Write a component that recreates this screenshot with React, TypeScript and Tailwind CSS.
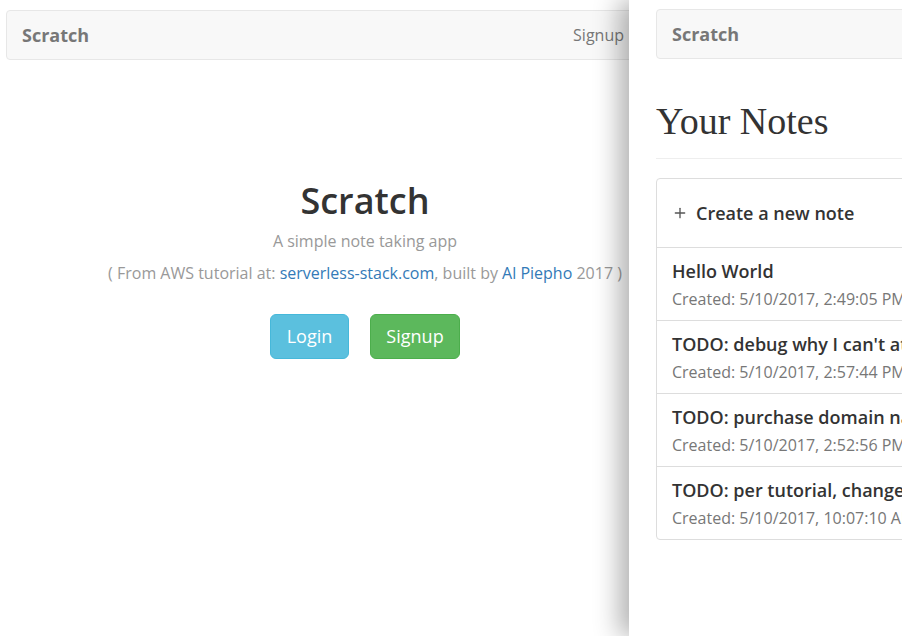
import { Plus } from 'lucide-react';

const notes = [
  { title: 'Hello World', created: 'Created: 5/10/2017, 2:49:05 PM' },
  { title: "TODO: debug why I can't attach files", created: 'Created: 5/10/2017, 2:57:44 PM' },
  { title: 'TODO: purchase domain name', created: 'Created: 5/10/2017, 2:52:56 PM' },
  { title: 'TODO: per tutorial, change the title', created: 'Created: 5/10/2017, 10:07:10 AM' },
];

const sans = "font-['Open_Sans','Liberation_Sans',sans-serif]";

function Navbar({ right }: { right?: string }) {
  return (
    <div className="h-[50px] flex items-center justify-between px-[15px] bg-[#f8f8f8] border border-[#e7e7e7] rounded-[4px]">
      <span className="text-[18px] font-bold text-[#777]">Scratch</span>
      {right && <span className="text-[16px] text-[#777]">{right}</span>}
    </div>
  );
}

export default function App() {
  return (
    <div className={`${sans} w-[902px] h-[636px] flex overflow-hidden bg-white`}>
      {/* Home page (partly covered) */}
      <div className="w-[629px] shrink-0 overflow-hidden">
        <div className="w-[730px]">
          <div className="pt-[10px] pl-[6px] w-[640px]">
            <Navbar right="Signup" />
          </div>
          <div className="text-center mt-[121px]">
            <h1 className="text-[36px] leading-[40px] font-semibold text-[#333]">Scratch</h1>
            <p className="mt-[9px] text-[16px] leading-[22px] text-[#999]">A simple note taking app</p>
            <p className="mt-[10px] text-[16px] leading-[22px] text-[#999]">
              ( From AWS tutorial at: <span className="text-[#337ab7]">serverless-stack.com</span>, built by{' '}
              <span className="text-[#337ab7]">Al Piepho</span> 2017 )
            </p>
            <div className="mt-[30px] flex justify-center gap-[21px]">
              <button className="w-[79px] h-[45px] rounded-[6px] bg-[#5bc0de] border border-[#46b8da] text-white text-[18px] font-medium">
                Login
              </button>
              <button className="w-[90px] h-[45px] rounded-[6px] bg-[#5cb85c] border border-[#4cae4c] text-white text-[18px] font-medium">
                Signup
              </button>
            </div>
          </div>
        </div>
      </div>

      {/* Notes page */}
      <div className="relative z-10 flex-1 min-w-0 bg-white shadow-[-10px_0_24px_rgba(0,0,0,0.3)]">
        <div className="w-[420px] pl-[27px]">
          <div className="pt-[9px]">
            <Navbar />
          </div>
          <h1 className="mt-[40px] text-[38px] leading-[44px] text-[#333] font-['Liberation_Serif',serif]">Your Notes</h1>
          <div className="mt-[15px] border-t border-[#eee]" />
          <div className="mt-[19px] border border-[#ddd] rounded-[4px]">
            <div className="h-[68px] flex items-center px-[15px] text-[18px] font-semibold text-[#333] whitespace-nowrap">
              <Plus size={16} strokeWidth={2} className="mr-[8px] text-[#555]" />
              Create a new note
            </div>
            {notes.map((n) => (
              <div key={n.created} className="h-[73px] border-t border-[#ddd] px-[15px] pt-[11px] whitespace-nowrap">
                <div className="text-[18px] leading-[24px] font-semibold text-[#333]">{n.title}</div>
                <div className="mt-[5px] text-[16px] leading-[22px] text-[#777]">{n.created}</div>
              </div>
            ))}
          </div>
        </div>
      </div>
    </div>
  );
}
